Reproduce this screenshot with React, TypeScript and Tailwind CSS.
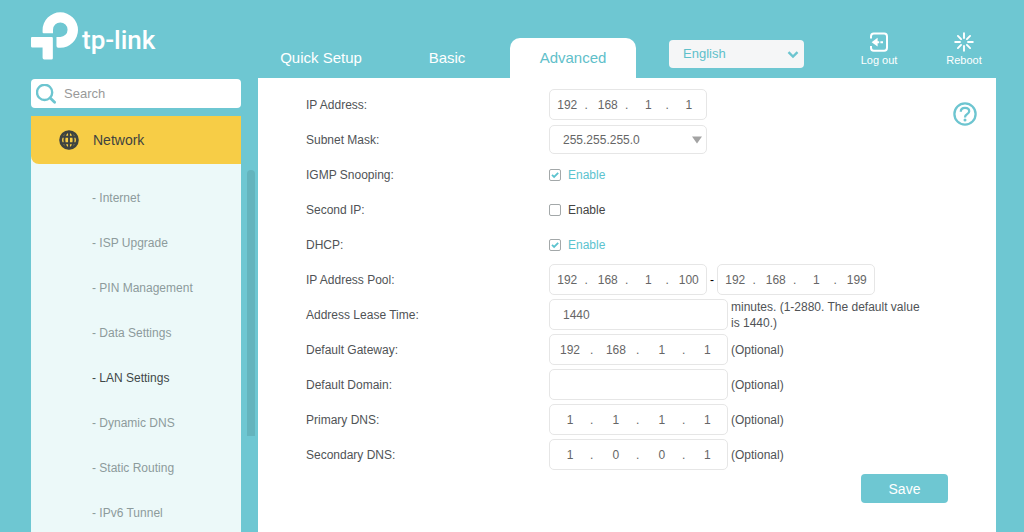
import { useState, type ReactNode } from "react";

const menu = ["Internet", "ISP Upgrade", "PIN Management", "Data Settings", "LAN Settings", "Dynamic DNS", "Static Routing", "IPv6 Tunnel"];
const tabs = ["Quick Setup", "Basic", "Advanced"];

function Logo() {
  return (
    <a href="#" className="flex items-start text-white" aria-label="tp-link">
      <svg viewBox="0 0 142 144" className="h-12 w-[47px]" fill="currentColor" aria-hidden="true">
        <path d="M35 61 V54 A53.5 53.5 0 1 1 88.5 107.5 H82 Q77 107.5 77 102 V75 H88.5 A22 22 0 1 0 66.5 53 V64 H38 Q35 64 35 61 Z" />
        <path d="M3 75 H63 Q66 75 66 78 V139 Q66 143 62 143 H40 Q35 143 35 138 V107 H4 Q0 107 0 103 V78 Q0 75 3 75 Z" />
      </svg>
      <span className="ml-1 mt-3.5 font-['Roboto'] text-[26px] leading-7 font-medium">tp-link</span>
    </a>
  );
}

function SearchIcon() {
  return (
    <svg viewBox="0 0 20 20" className="h-5 w-5 shrink-0 text-[#6dc5d0]" fill="none" stroke="currentColor" strokeWidth="2.4" strokeLinecap="round" aria-hidden="true">
      <circle cx="8.6" cy="8.4" r="7.6" />
      <path d="M14.2 14 L18.6 18.2" strokeWidth="2.8" />
    </svg>
  );
}

function GlobeIcon() {
  return (
    <svg viewBox="0 0 20 20" className="h-5 w-5" fill="none" stroke="currentColor" strokeWidth="1.9" aria-hidden="true">
      <circle cx="10" cy="10" r="8.4" strokeWidth="2.8" />
      <ellipse cx="10" cy="10" rx="4.6" ry="8.4" />
      <path d="M10 1 V19 M2 6.8 H18 M2 13.2 H18" />
    </svg>
  );
}

function LogoutIcon() {
  return (
    <svg viewBox="0 0 20 20" className="h-5 w-5" fill="none" stroke="currentColor" strokeWidth="2" aria-hidden="true">
      <path d="M2 6.5 V4.5 Q2 1.6 4.8 1.6 H15.2 Q18 1.6 18 4.5 V15.8 Q18 18.7 15.2 18.7 H4.8 Q2 18.7 2 15.8 V14" />
      <path d="M2.6 10.2 L8.6 5.8 V14.6 Z" fill="currentColor" stroke="none" />
      <path d="M8 10.2 H10.2 M11.4 10.2 H14" />
    </svg>
  );
}

function RebootIcon() {
  return (
    <svg viewBox="0 0 20 20" className="h-5 w-5" fill="none" stroke="currentColor" strokeWidth="1.9" strokeLinecap="round" aria-hidden="true">
      <path d="M10 1.2 V6 M10 14 V18.8 M1.2 10 H6 M14 10 H18.8 M3.9 3.9 L7.1 7.1 M12.9 12.9 L16.1 16.1 M16.1 3.9 L12.9 7.1 M7.1 12.9 L3.9 16.1" />
    </svg>
  );
}

function HelpIcon() {
  return (
    <svg viewBox="0 0 24 24" className="h-6 w-6" fill="none" stroke="currentColor" strokeWidth="2.3" aria-hidden="true">
      <circle cx="12" cy="12" r="10.6" />
      <path d="M7.8 9.8 Q7.8 5.9 12 5.9 Q16.2 5.9 16.2 9.3 Q16.2 11 14 12.2 Q12 13.3 12 15.6" />
      <circle cx="12" cy="18" r="1.5" fill="currentColor" stroke="none" />
    </svg>
  );
}

function Row({ label, id, children }: { label: string; id: string; children: ReactNode }) {
  return (
    <div className="flex h-[35px] items-center">
      <label htmlFor={id} className="w-[243px] shrink-0 text-[#505356]">{label}</label>
      {children}
    </div>
  );
}

function IpInput({ id, name, value, wide }: { id: string; name: string; value: string; wide?: boolean }) {
  return (
    <div className={`flex h-[31px] shrink-0 items-center rounded-[5px] border border-[#e6e6e6] text-[#666] ${wide ? "w-[179px]" : "w-[158px]"}`}>
      {value.split(".").map((octet, i) => (
        <div key={i} className={i < 3 ? "flex flex-[40] items-center" : "flex flex-[34] items-center"}>
          <input id={i === 0 ? id : `${id}-${i}`} aria-label={`${name} part ${i + 1}`} defaultValue={octet} maxLength={3} className="w-0 min-w-0 flex-1 text-center outline-none" />
          {i < 3 && <span className="w-1.5">.</span>}
        </div>
      ))}
    </div>
  );
}

function EnableBox({ id, initial }: { id: string; initial: boolean }) {
  const [on, setOn] = useState(initial);
  return (
    <span className={`flex items-center gap-[7px] ${on ? "text-[#5cc3cf]" : "text-[#444]"}`}>
      <span className="relative flex">
        <input id={id} type="checkbox" checked={on} onChange={() => setOn(!on)} className="h-3 w-3 appearance-none rounded-[2px] border border-[#a3a8a9] bg-white" />
        {on && (
          <svg viewBox="0 0 12 12" className="pointer-events-none absolute inset-0 h-3 w-3" fill="none" stroke="currentColor" strokeWidth="1.8" aria-hidden="true">
            <path d="M3 5.8 L5.1 7.9 L9.2 3.8" />
          </svg>
        )}
      </span>
      <label htmlFor={id}>Enable</label>
    </span>
  );
}

export default function App() {
  const [tab, setTab] = useState("Advanced");
  const [page, setPage] = useState("LAN Settings");

  return (
    <div className="flex min-h-screen bg-[#6ec7d2] font-['Liberation_Sans',Arial,sans-serif] text-[12px] leading-4">
      {/* sidebar */}
      <aside className="flex w-[258px] shrink-0 flex-col pl-[31px]">
        <div className="h-[79px] pt-3"><Logo /></div>
        <div className="mb-2 flex h-[29px] w-[210px] items-center gap-2 rounded-[4px] bg-white pl-[5px]">
          <SearchIcon />
          <input type="search" aria-label="Search" placeholder="Search" className="min-w-0 flex-1 text-[13px] outline-none placeholder:text-[#999]" />
        </div>
        <div className="flex flex-1 gap-1.5">
          <nav className="w-[210px] bg-[#ecf9f9]">
            <button type="button" className="flex h-12 w-full items-center gap-[14px] rounded-bl-lg bg-[#f7cd46] pl-7 text-[14px] text-[#3f4340]">
              <GlobeIcon />
              Network
            </button>
            <ul className="pt-[11px]">
              {menu.map((m) => (
                <li key={m}>
                  <a href="#" onClick={() => setPage(m)} className={`flex h-[45px] items-center pl-[61px] ${m === page ? "text-[#3f4848]" : "text-[#8d9b9c]"}`}>- {m}</a>
                </li>
              ))}
            </ul>
          </nav>
          <div className="mt-[54px] h-[266px] w-2 rounded-t-full bg-[#64b4bd]" />
        </div>
      </aside>

      <div className="flex min-w-0 flex-1 flex-col pr-7">
        <header className="flex h-[78px] items-end">
          <nav className="flex">
            {tabs.map((t) => (
              <button key={t} type="button" onClick={() => setTab(t)} className={`h-10 w-[126px] rounded-t-[10px] text-[15px] ${t === tab ? "bg-white text-[#5fc0ca]" : "text-white"}`}>{t}</button>
            ))}
          </nav>
          <div className="relative mb-2.5 ml-[33px]">
            <select aria-label="Language" className="h-7 w-[135px] appearance-none rounded-[4px] bg-[#f5f6f7] pl-3.5 text-[13px] text-[#5fc0ca]">
              <option>English</option>
            </select>
            <svg viewBox="0 0 12 8" className="pointer-events-none absolute top-[11px] right-[5px] h-2 w-3 text-[#6dc5d0]" fill="none" stroke="currentColor" strokeWidth="2.4" aria-hidden="true">
              <path d="M1.5 1.2 L6 5.6 L10.5 1.2" />
            </svg>
          </div>
          <div className="mb-2.5 ml-auto flex gap-[21px] text-[11px] text-white">
            <button type="button" className="flex w-16 flex-col items-center"><LogoutIcon />Log out</button>
            <button type="button" className="flex w-16 flex-col items-center"><RebootIcon />Reboot</button>
          </div>
        </header>

        <main className="flex flex-1 items-start bg-white pl-12">
          <form className="min-w-0 flex-1 pt-[9px]" onSubmit={(e) => e.preventDefault()}>
            <Row label="IP Address:" id="ip"><IpInput id="ip" name="IP Address" value="192.168.1.1" /></Row>
            <Row label="Subnet Mask:" id="mask">
              <div className="relative">
                <select id="mask" className="h-[29px] w-[158px] appearance-none rounded-[5px] border border-[#e6e6e6] pl-[13px] text-[#666]">
                  <option>255.255.255.0</option>
                </select>
                <svg viewBox="0 0 12 8" className="pointer-events-none absolute top-[11px] right-1 h-2 w-3" aria-hidden="true">
                  <path d="M1 0.5 H11 L6 7.5 Z" fill="#a3a3a3" />
                </svg>
              </div>
            </Row>
            <Row label="IGMP Snooping:" id="igmp"><EnableBox id="igmp" initial={true} /></Row>
            <Row label="Second IP:" id="second"><EnableBox id="second" initial={false} /></Row>
            <Row label="DHCP:" id="dhcp"><EnableBox id="dhcp" initial={true} /></Row>
            <Row label="IP Address Pool:" id="pool">
              <IpInput id="pool" name="Pool start" value="192.168.1.100" />
              <span className="px-[3px]">-</span>
              <IpInput id="pool-end" name="Pool end" value="192.168.1.199" />
            </Row>
            <Row label="Address Lease Time:" id="lease">
              <input id="lease" defaultValue="1440" className="h-[31px] w-[179px] shrink-0 rounded-[5px] border border-[#e6e6e6] pl-[13px] text-[#666]" />
              <span className="ml-[3px] max-w-[200px] text-[#505356]">minutes. (1-2880. The default value is 1440.)</span>
            </Row>
            <Row label="Default Gateway:" id="gateway">
              <IpInput id="gateway" name="Default Gateway" value="192.168.1.1" wide />
              <span className="ml-[3px] text-[#505356]">(Optional)</span>
            </Row>
            <Row label="Default Domain:" id="domain">
              <input id="domain" className="h-[31px] w-[179px] shrink-0 rounded-[5px] border border-[#e6e6e6] pl-[13px] text-[#666]" />
              <span className="ml-[3px] text-[#505356]">(Optional)</span>
            </Row>
            <Row label="Primary DNS:" id="dns1">
              <IpInput id="dns1" name="Primary DNS" value="1.1.1.1" wide />
              <span className="ml-[3px] text-[#505356]">(Optional)</span>
            </Row>
            <Row label="Secondary DNS:" id="dns2">
              <IpInput id="dns2" name="Secondary DNS" value="1.0.0.1" wide />
              <span className="ml-[3px] text-[#505356]">(Optional)</span>
            </Row>
            <div className="flex justify-end pt-0.5 pr-[5px]">
              <button type="submit" className="h-[29px] w-[87px] rounded-[4px] bg-[#6ec7d2] text-[14px] text-white">Save</button>
            </div>
          </form>
          <button type="button" aria-label="Help" className="mt-6 mr-[19px] text-[#6dc5d0]"><HelpIcon /></button>
        </main>
      </div>
    </div>
  );
}
